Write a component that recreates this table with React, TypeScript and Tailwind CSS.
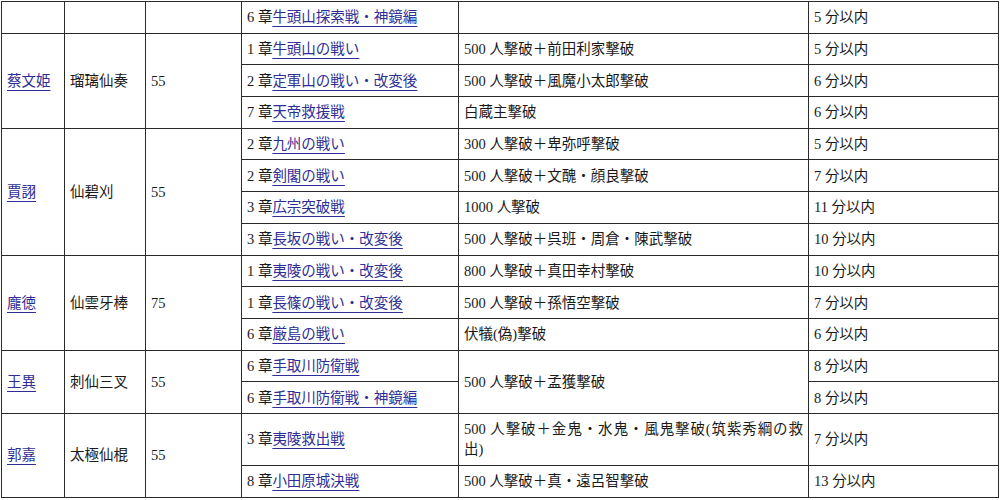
import React from "react";

const L = ({ children }: { children: React.ReactNode }) => (
  <a className="text-[#2e2e96] underline underline-offset-[4px] decoration-[1px]" href="#">
    {children}
  </a>
);

const td = "border border-[#2a2a2a] px-[5px] align-middle whitespace-nowrap";
const tdw = "border border-[#2a2a2a] px-[5px] align-middle";

type Row = {
  stage: [string, string];
  cond?: string;
  condSpan?: number;
  condSkip?: boolean;
  time: string;
  h?: string;
};

type Group = {
  name?: string;
  weapon?: string;
  lv?: string;
  rows: Row[];
};

const groups: Group[] = [
  {
    rows: [{ stage: ["6 章", "牛頭山探索戦・神鏡編"], cond: "", time: "5 分以内" }],
  },
  {
    name: "蔡文姫",
    weapon: "瑠璃仙奏",
    lv: "55",
    rows: [
      { stage: ["1 章", "牛頭山の戦い"], cond: "500 人撃破＋前田利家撃破", time: "5 分以内" },
      { stage: ["2 章", "定軍山の戦い・改変後"], cond: "500 人撃破＋風魔小太郎撃破", time: "6 分以内" },
      { stage: ["7 章", "天帝救援戦"], cond: "白蔵主撃破", time: "6 分以内" },
    ],
  },
  {
    name: "賈詡",
    weapon: "仙碧刈",
    lv: "55",
    rows: [
      { stage: ["2 章", "九州の戦い"], cond: "300 人撃破＋卑弥呼撃破", time: "5 分以内" },
      { stage: ["2 章", "剣閣の戦い"], cond: "500 人撃破＋文醜・顔良撃破", time: "7 分以内" },
      { stage: ["3 章", "広宗突破戦"], cond: "1000 人撃破", time: "11 分以内" },
      { stage: ["3 章", "長坂の戦い・改変後"], cond: "500 人撃破＋呉班・周倉・陳武撃破", time: "10 分以内" },
    ],
  },
  {
    name: "龐徳",
    weapon: "仙雲牙棒",
    lv: "75",
    rows: [
      { stage: ["1 章", "夷陵の戦い・改変後"], cond: "800 人撃破＋真田幸村撃破", time: "10 分以内" },
      { stage: ["1 章", "長篠の戦い・改変後"], cond: "500 人撃破＋孫悟空撃破", time: "7 分以内" },
      { stage: ["6 章", "厳島の戦い"], cond: "伏犠(偽)撃破", time: "6 分以内" },
    ],
  },
  {
    name: "王異",
    weapon: "刺仙三叉",
    lv: "55",
    rows: [
      { stage: ["6 章", "手取川防衛戦"], cond: "500 人撃破＋孟獲撃破", condSpan: 2, time: "8 分以内" },
      { stage: ["6 章", "手取川防衛戦・神鏡編"], condSkip: true, time: "8 分以内" },
    ],
  },
  {
    name: "郭嘉",
    weapon: "太極仙棍",
    lv: "55",
    rows: [
      {
        stage: ["3 章", "夷陵救出戦"],
        cond: "500 人撃破＋金鬼・水鬼・風鬼撃破(筑紫秀綱の救出)",
        time: "7 分以内",
        h: "h-[52px]",
      },
      { stage: ["8 章", "小田原城決戦"], cond: "500 人撃破＋真・遠呂智撃破", time: "13 分以内" },
    ],
  },
];

export default function App() {
  return (
    <div
      className="w-[1001px] h-[500px] bg-white overflow-hidden pt-px pl-px text-[14.5px] text-[#1a1a1a] leading-[20px]"
      style={{ fontFamily: '"Liberation Serif", "Noto Sans CJK JP", serif' }}
    >
      <table className="table-fixed border-collapse w-[997px]">
        <colgroup>
          <col className="w-[63px]" />
          <col className="w-[81px]" />
          <col className="w-[96px]" />
          <col className="w-[217px]" />
          <col className="w-[350px]" />
          <col className="w-[190px]" />
        </colgroup>
        <tbody>
          {groups.map((g, gi) =>
            g.rows.map((r, ri) => (
              <tr key={`${gi}-${ri}`} className={r.h ?? "h-[31.7px]"}>
                {ri === 0 && (
                  <>
                    <td className={td} rowSpan={g.rows.length}>
                      {g.name ? <L>{g.name}</L> : null}
                    </td>
                    <td className={td} rowSpan={g.rows.length}>
                      {g.weapon ?? ""}
                    </td>
                    <td className={td} rowSpan={g.rows.length}>
                      {g.lv ?? ""}
                    </td>
                  </>
                )}
                <td className={td}>
                  {r.stage[0]}
                  <L>{r.stage[1]}</L>
                </td>
                {!r.condSkip && (
                  <td className={`${tdw} text-justify`} rowSpan={r.condSpan ?? 1}>
                    {r.cond}
                  </td>
                )}
                <td className={td}>{r.time}</td>
              </tr>
            ))
          )}
        </tbody>
      </table>
    </div>
  );
}
